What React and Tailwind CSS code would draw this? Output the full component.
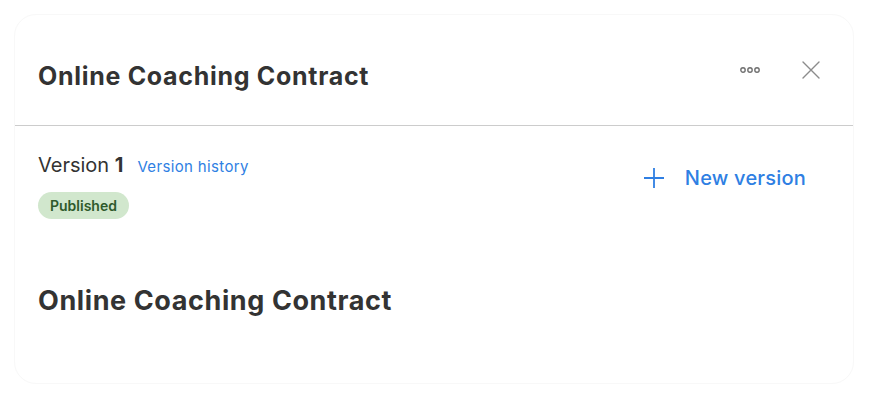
export default function App() {
  return (
    <div className="h-[410px] w-[872px] bg-white pl-[14px] pt-[14px] font-['Inter',sans-serif] text-[#333333]">
      <div className="flex h-[370px] w-[840px] flex-col rounded-[22px] border border-[#f8f8f8] bg-white">
        <div className="flex h-[111px] items-center justify-between border-b border-[#cccccc] pl-[23px] pr-[33px]">
          <h1 className="pt-[12px] text-[25px] font-bold leading-[30px] tracking-[0.7px]">Online Coaching Contract</h1>
          <div className="flex items-center gap-[42px]">
            <svg width="20" height="8" viewBox="0 0 20 8" fill="none" stroke="#707070" strokeWidth="1.4">
              <circle cx="3" cy="4" r="2.2" />
              <circle cx="10" cy="4" r="2.2" />
              <circle cx="17" cy="4" r="2.2" />
            </svg>
            <svg width="18" height="18" viewBox="0 0 18 18" fill="none" stroke="#8c8c8c" strokeWidth="1.4" strokeLinecap="round">
              <path d="M1 1L17 17M17 1L1 17" />
            </svg>
          </div>
        </div>

        <div className="flex justify-between pl-[23px] pr-[47px] pt-[27px]">
          <div>
            <div className="flex items-baseline gap-[14px]">
              <span className="text-[20px] leading-[24px]">
                Version <span className="font-bold">1</span>
              </span>
              <a href="#" className="text-[15px] tracking-[0.35px] text-[#2f7fe3]">Version history</a>
            </div>
            <span className="mt-[13px] inline-flex h-[27px] items-center rounded-full bg-[#d1e7cd] px-[12px] text-[14px] font-semibold text-[#2f5a2b]">
              Published
            </span>
          </div>
          <button className="mt-[13px] flex h-[24px] items-center gap-[20px] text-[20px] font-medium tracking-[0.2px] text-[#2f7fe3]">
            <svg width="22" height="22" viewBox="0 0 22 22" fill="none" stroke="#2f7fe3" strokeWidth="1.8">
              <path d="M11 1V21M1 11H21" />
            </svg>
            New version
          </button>
        </div>

        <h2 className="mt-[66px] pl-[23px] text-[27px] font-bold leading-[32px] tracking-[0.6px]">Online Coaching Contract</h2>
      </div>
    </div>
  )
}
